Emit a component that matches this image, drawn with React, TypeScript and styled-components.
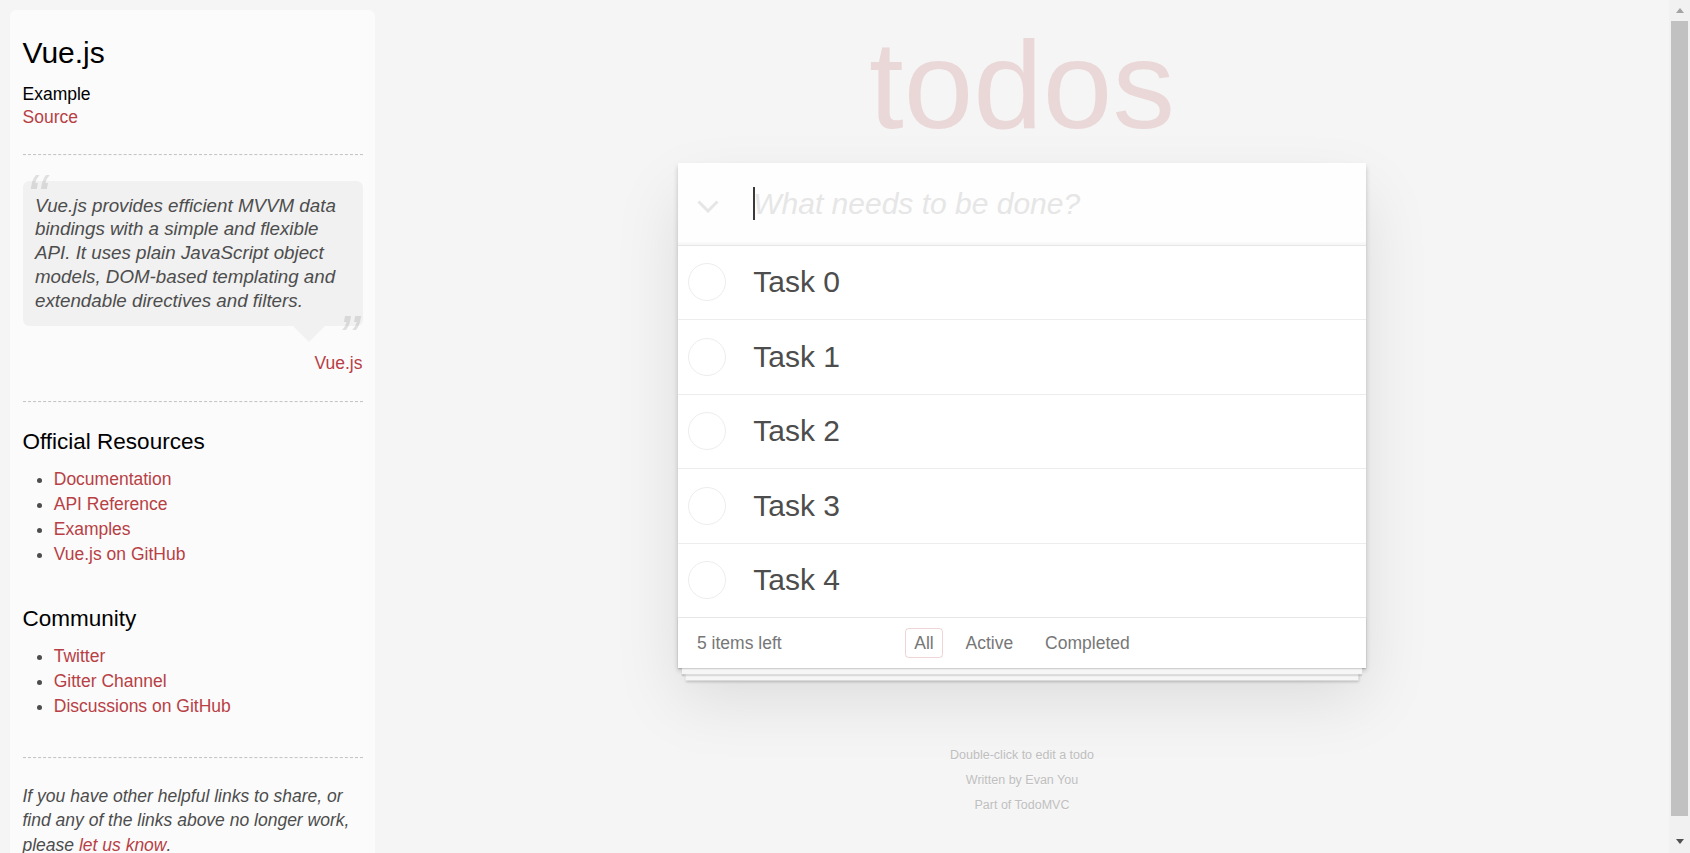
import React from "react";
import styled, { createGlobalStyle } from "styled-components";

const GlobalStyle = createGlobalStyle`
  html, body { margin: 0; padding: 0; }
  body {
    background: #f5f5f5;
    color: #4d4d4d;
    font-family: "Liberation Sans", Arial, Helvetica, sans-serif;
    font-size: 17.5px;
    line-height: 24.5px;
    font-weight: 300;
    -webkit-font-smoothing: antialiased;
  }
`;

/* ---------- Window frame with its scrollbar ---------- */

const Viewport = styled.div`
  display: flex;
  height: 100vh;
  overflow: hidden;
`;

const Content = styled.div`
  flex: 1;
  min-width: 0;
  height: 100%;
  overflow: hidden;
`;

const ScrollBar = styled.div`
  flex: none;
  display: flex;
  flex-direction: column;
  width: 21px;
  height: 100%;
  background: #f1f1f1;
`;

const ScrollButton = styled.div<{ $offset?: number }>`
  flex: none;
  display: flex;
  align-items: center;
  justify-content: center;
  height: 21px;
  padding-bottom: ${(p) => p.$offset ?? 0}px;
  box-sizing: border-box;
`;

const Arrow = styled.span<{ $dir: "up" | "down" }>`
  width: 0;
  height: 0;
  border-left: 4.5px solid transparent;
  border-right: 4.5px solid transparent;
  ${(p) =>
    p.$dir === "up" ? "border-bottom: 5px solid #a3a3a3;" : "border-top: 5px solid #505050;"}
`;

const Track = styled.div`
  flex: 1;
  padding: 0 2px;
`;

const Thumb = styled.div`
  height: 795px;
  background: #c1c1c1;
`;

const Page = styled.div`
  display: grid;
  grid-template-columns: 375px minmax(0, 1fr);
  align-items: start;
`;

/* ---------- Sidebar ---------- */

const Learn = styled.aside`
  margin: 10px 0 0 10px;
  padding: 12.5px;
  border-radius: 6.25px;
  background: rgba(255, 255, 255, 0.6);
`;

const SiteTitle = styled.h3`
  margin: 12.5px 0;
  font-size: 30px;
  font-weight: 500;
  line-height: 1.2;
  color: #000;
`;

const SourceLabel = styled.h5`
  margin: 12.5px 0 0;
  font-size: 17.5px;
  font-weight: 500;
  line-height: 1.2;
  color: #000;
`;

const Link = styled.a`
  color: #b83f45;
  font-weight: normal;
  text-decoration: none;
`;

const Rule = styled.hr`
  margin: 25px 0;
  height: 0;
  border: 0;
  border-top: 1px dashed #c5c5c5;
  border-bottom: 1px dashed #f7f7f7;
`;

const Quote = styled.blockquote`
  position: relative;
  margin: 25px 0 0;
  padding: 12.5px;
  background: rgba(0, 0, 0, 0.04);
  border-radius: 6.25px;

  &::after {
    content: "";
    position: absolute;
    top: 100%;
    right: 37.5px;
    border: 16.25px solid transparent;
    border-top-color: rgba(0, 0, 0, 0.04);
  }
`;

const QuoteText = styled.p`
  margin: 0;
  font-size: 18.75px;
  line-height: 23.9px;
  font-style: italic;
  font-weight: 300;

  &::before,
  &::after {
    position: absolute;
    font-size: 62.5px;
    line-height: 81.25px;
    opacity: 0.15;
  }
  &::before {
    content: "“";
    top: -25px;
    left: 3.75px;
  }
  &::after {
    content: "”";
    bottom: -52.5px;
    right: 3.75px;
  }
`;

const Attribution = styled.footer`
  margin-top: 25.5px;
  text-align: right;
`;

const SectionTitle = styled.h4`
  margin: 12.5px 0;
  font-size: 22.5px;
  font-weight: 500;
  line-height: 1.2;
  color: #000;
`;

const LinkList = styled.ul`
  margin: 0 0 37.5px 31.25px;
  padding: 0;
`;

const LinkItem = styled.li`
  line-height: 25px;
`;

const Note = styled.em`
  font-style: italic;
`;

/* ---------- Todo app ---------- */

const Main = styled.main`
  justify-self: center;
  width: 687.5px;
`;

const Title = styled.h1`
  margin: 0 0 15.5px;
  padding-top: 22px;
  font-size: 125px;
  line-height: 125px;
  font-weight: 100;
  text-align: center;
  color: rgba(175, 47, 47, 0.15);
  text-rendering: optimizeLegibility;
`;

const Card = styled.section`
  position: relative;
  background: #fff;
  box-shadow: 0 2.5px 5px 0 rgba(0, 0, 0, 0.2), 0 31.25px 62.5px 0 rgba(0, 0, 0, 0.1);
`;

const NewTodoRow = styled.header`
  display: flex;
  align-items: center;
  height: 82px;
  background: rgba(0, 0, 0, 0.003);
  box-shadow: inset 0 -2.5px 1.25px rgba(0, 0, 0, 0.03);
`;

const ToggleAll = styled.label`
  flex: none;
  display: flex;
  align-items: center;
  justify-content: center;
  width: 60px;
  height: 100%;
  padding-top: 5px;
  box-sizing: border-box;
`;

const NewTodoField = styled.div`
  position: relative;
  flex: 1;
  min-width: 0;
  height: 100%;
`;

const NewTodoInput = styled.input`
  width: 100%;
  height: 100%;
  box-sizing: border-box;
  margin: 0;
  padding: 0 20px 0 15px;
  border: none;
  outline: none;
  background: transparent;
  font-family: inherit;
  font-size: 30px;
  line-height: 42px;
  color: #4d4d4d;

  &::placeholder {
    font-style: italic;
    font-weight: 300;
    color: #e6e6e6;
  }
`;

const Caret = styled.span`
  position: absolute;
  left: 14.5px;
  top: 24px;
  width: 2px;
  height: 33px;
  background: #3a3a3a;
  pointer-events: none;
`;

const TodoList = styled.ul`
  margin: 0;
  padding: 0;
  list-style: none;
  border-top: 1px solid #e6e6e6;
`;

const TodoItem = styled.li`
  display: flex;
  align-items: center;
  height: 73.5px;
  border-bottom: 1px solid #ededed;
  font-size: 30px;
  line-height: 36px;

  &:last-child {
    border-bottom: none;
  }
`;

const Toggle = styled.input`
  flex: none;
  appearance: none;
  width: 38px;
  height: 38px;
  box-sizing: border-box;
  margin: 0 27.5px 0 9.5px;
  border: 1px solid #ededed;
  border-radius: 50%;
  background: transparent;
`;

const TaskLabel = styled.label`
  font-weight: 400;
  color: #4d4d4d;
  word-break: break-all;
`;

const Footer = styled.footer`
  display: grid;
  grid-template-columns: 1fr auto 1fr;
  grid-template-rows: 25px;
  align-items: center;
  height: 25px;
  padding: 12.5px 18.75px;
  border-top: 1px solid #e6e6e6;
  color: #777;
  font-size: 17.5px;
  line-height: 24.5px;
  box-shadow:
    0 1.25px 1.25px rgba(0, 0, 0, 0.2),
    0 10px 0 -3.75px #f6f6f6,
    0 11.25px 1.25px -3.75px rgba(0, 0, 0, 0.2),
    0 20px 0 -7.5px #f6f6f6,
    0 21.25px 2.5px -7.5px rgba(0, 0, 0, 0.2);
`;

const TodoCount = styled.span`
  justify-self: start;
  strong {
    font-weight: 300;
  }
`;

const Filters = styled.ul`
  display: flex;
  gap: 4.86px;
  margin: 0;
  padding: 0;
  list-style: none;
`;

const FilterLink = styled.a<{ $selected?: boolean }>`
  display: block;
  margin: 0 3.75px;
  padding: 3.75px 8.75px;
  line-height: 20px;
  color: inherit;
  text-decoration: none;
  border: 1px solid ${(p) => (p.$selected ? "rgba(175, 47, 47, 0.2)" : "transparent")};
  border-radius: 3.75px;
`;

const Info = styled.footer`
  margin-top: 81.25px;
  text-align: center;
  color: #bfbfbf;
  font-size: 12.5px;
  text-shadow: 0 1.25px 0 rgba(255, 255, 255, 0.5);
`;

const InfoLine = styled.p`
  margin: 12.5px 0;
  line-height: 1;

  a {
    color: inherit;
    text-decoration: none;
  }
`;

const ChevronIcon = () => (
  <svg width="22" height="13" viewBox="0 0 22 13" aria-hidden="true">
    <polyline points="1.5,1.5 11,11 20.5,1.5" fill="none" stroke="#e6e6e6" strokeWidth="3" />
  </svg>
);

const tasks = ["Task 0", "Task 1", "Task 2", "Task 3", "Task 4"];

export default function App() {
  return (
    <>
      <GlobalStyle />
      <Viewport>
        <Content>
          <Page>
            <Learn>
              <header>
                <SiteTitle>Vue.js</SiteTitle>
                <div>
                  <SourceLabel>Example</SourceLabel>
                  <Link href="#">Source</Link>
                </div>
              </header>
              <Rule />
              <Quote>
                <QuoteText>
                  Vue.js provides efficient MVVM data bindings with a simple and flexible API. It uses plain
                  JavaScript object models, DOM-based templating and extendable directives and filters.
                </QuoteText>
              </Quote>
              <Attribution>
                <Link href="#">Vue.js</Link>
              </Attribution>
              <Rule />
              <SectionTitle>Official Resources</SectionTitle>
              <LinkList>
                <LinkItem><Link href="#">Documentation</Link></LinkItem>
                <LinkItem><Link href="#">API Reference</Link></LinkItem>
                <LinkItem><Link href="#">Examples</Link></LinkItem>
                <LinkItem><Link href="#">Vue.js on GitHub</Link></LinkItem>
              </LinkList>
              <SectionTitle>Community</SectionTitle>
              <LinkList>
                <LinkItem><Link href="#">Twitter</Link></LinkItem>
                <LinkItem><Link href="#">Gitter Channel</Link></LinkItem>
                <LinkItem><Link href="#">Discussions on GitHub</Link></LinkItem>
              </LinkList>
              <footer>
                <Rule />
                <Note>
                  If you have other helpful links to share, or find any of the links above no longer work,
                  please <Link href="#">let us know</Link>.
                </Note>
              </footer>
            </Learn>

            <Main>
              <Title>todos</Title>
              <Card>
                <NewTodoRow>
                  <ToggleAll>
                    <ChevronIcon />
                  </ToggleAll>
                  <NewTodoField>
                    <NewTodoInput placeholder="What needs to be done?" />
                    <Caret />
                  </NewTodoField>
                </NewTodoRow>
                <TodoList>
                  {tasks.map((t) => (
                    <TodoItem key={t}>
                      <Toggle type="checkbox" />
                      <TaskLabel>{t}</TaskLabel>
                    </TodoItem>
                  ))}
                </TodoList>
                <Footer>
                  <TodoCount>
                    <strong>5</strong> items left
                  </TodoCount>
                  <Filters>
                    <li><FilterLink href="#" $selected>All</FilterLink></li>
                    <li><FilterLink href="#">Active</FilterLink></li>
                    <li><FilterLink href="#">Completed</FilterLink></li>
                  </Filters>
                </Footer>
              </Card>
              <Info>
                <InfoLine>Double-click to edit a todo</InfoLine>
                <InfoLine>Written by <a href="#">Evan You</a></InfoLine>
                <InfoLine>Part of <a href="#">TodoMVC</a></InfoLine>
              </Info>
            </Main>
          </Page>
        </Content>
        <ScrollBar>
          <ScrollButton>
            <Arrow $dir="up" />
          </ScrollButton>
          <Track>
            <Thumb />
          </Track>
          <ScrollButton $offset={2}>
            <Arrow $dir="down" />
          </ScrollButton>
        </ScrollBar>
      </Viewport>
    </>
  );
}
